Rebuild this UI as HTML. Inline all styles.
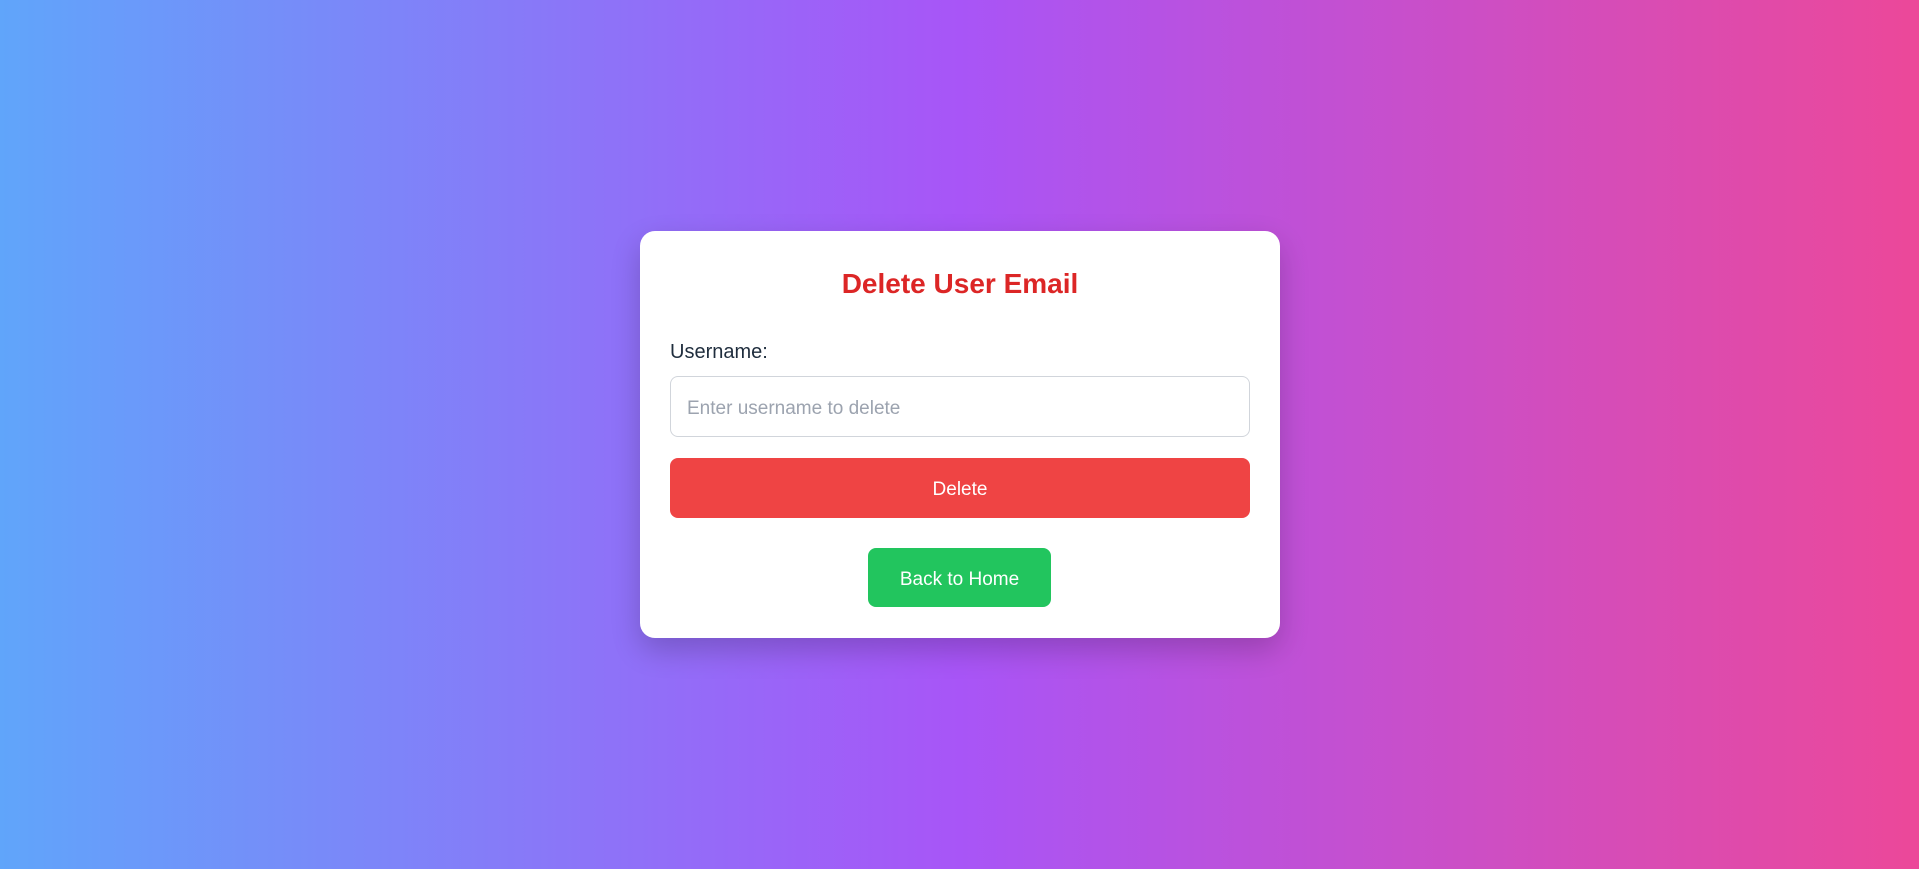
<!DOCTYPE html>
<html><head><meta charset="utf-8"><style>
*{box-sizing:border-box;margin:0;padding:0}
html,body{width:1919px;height:869px;overflow:hidden}
body{background:linear-gradient(90deg,#60a5fa,#a855f7 50%,#ec4899);font-family:"Liberation Sans",sans-serif;position:relative}
.card{position:absolute;left:640px;top:231px;width:640px;height:407px;background:#fff;border-radius:15px;box-shadow:0 12px 30px rgba(0,0,0,.2);padding:30px}
h1{color:#dc2626;font-size:28px;font-weight:600;text-align:center;line-height:1;position:absolute;left:0;right:0;top:39px}
.lbl{position:absolute;left:30px;top:110px;font-size:20px;color:#1f2d3d}
.inp{position:absolute;left:30px;top:145px;width:580px;height:61px;border:1px solid #d1d5db;border-radius:8px;padding-left:16px;font-size:19px;color:#9ca3af;line-height:63px}
.del{position:absolute;left:30px;top:227px;width:580px;height:60px;background:#ef4444;border-radius:8px;color:#fff;font-size:19px;text-align:center;line-height:64px}
.back{position:absolute;left:228px;top:317px;width:183px;height:59px;background:#22c55e;border-radius:8px;color:#fff;font-size:19px;text-align:center;line-height:63px}
</style></head><body>
<div class="card">
<h1>Delete User Email</h1>
<div class="lbl">Username:</div>
<div class="inp">Enter username to delete</div>
<div class="del">Delete</div>
<div class="back">Back to Home</div>
</div>
</body></html>
